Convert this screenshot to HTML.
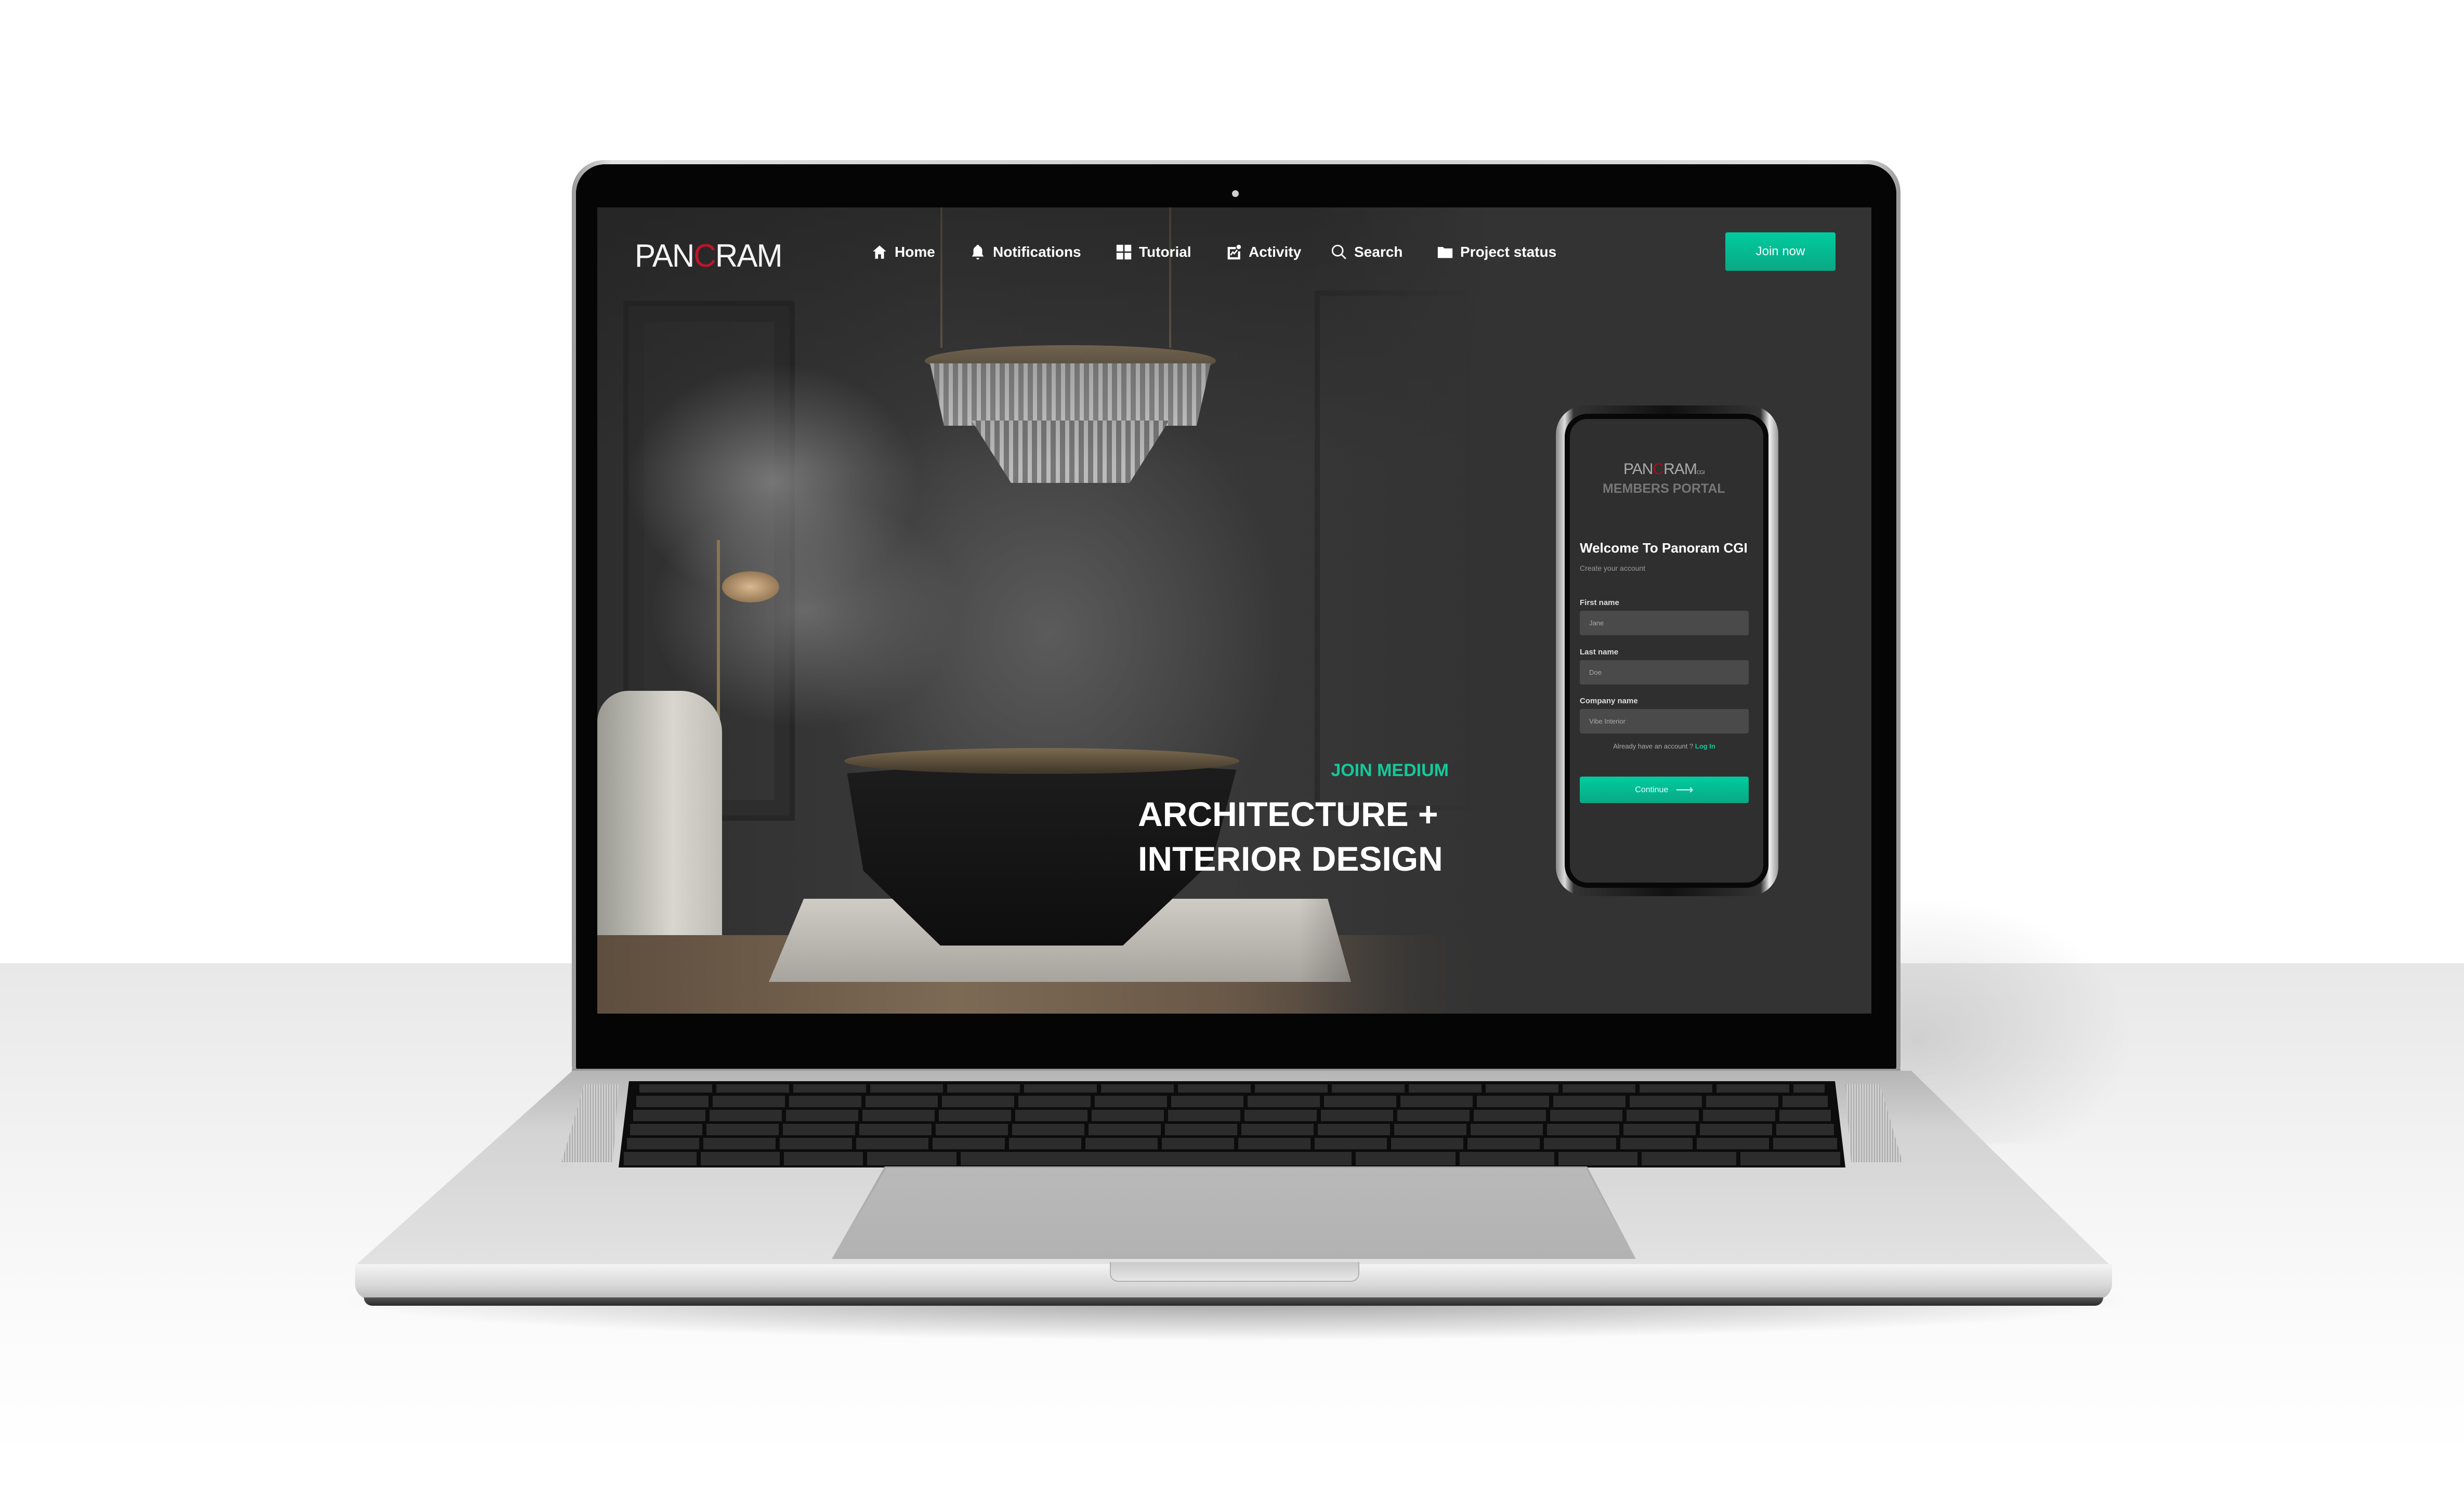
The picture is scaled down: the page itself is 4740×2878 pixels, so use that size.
<!DOCTYPE html>
<html><head><meta charset="utf-8">
<style>
*{margin:0;padding:0;box-sizing:border-box}
html,body{width:4740px;height:2878px;background:#fff;overflow:hidden;font-family:"Liberation Sans",sans-serif}
.abs{position:absolute}
#floor{left:0;top:1853px;width:4740px;height:1025px;background:linear-gradient(#e8e8e8 0,#f1f1f1 300px,#fafafa 650px,#fff 950px)}
#shadow{left:640px;top:2470px;width:3480px;height:110px;background:radial-gradient(ellipse at 50% 30%,rgba(0,0,0,.35),rgba(0,0,0,0) 70%)}
#rshadow{left:3640px;top:1700px;width:500px;height:500px;background:radial-gradient(ellipse at 10% 60%,rgba(0,0,0,.12),rgba(0,0,0,0) 65%)}
#lidOuter{left:1100px;top:308px;width:2556px;height:1756px;border-radius:62px 62px 14px 14px;background:linear-gradient(90deg,#9a9a9a,#e0e0e0 3%,#cfcfcf 50%,#e0e0e0 97%,#9a9a9a)}
#lid{left:1108px;top:316px;width:2540px;height:1744px;border-radius:56px 56px 8px 8px;background:#050505}
#cam{left:2370px;top:366px;width:13px;height:13px;border-radius:50%;background:#cfcfcf}
#screen{left:1149px;top:399px;width:2451px;height:1551px;background:#333;overflow:hidden}
#deck{left:683px;top:2060px;width:3380px;height:380px;clip-path:polygon(418px 0,2994px 0,3377px 375px,0 375px);background:linear-gradient(#b5b5b5,#d3d3d3 30%,#dcdcdc 70%,#e2e2e2)}
#hinge{left:1100px;top:2056px;width:2556px;height:10px;background:linear-gradient(#8a8a8a,#c9c9c9)}
#lip{left:683px;top:2432px;width:3380px;height:68px;border-radius:0 0 30px 30px;background:linear-gradient(#f4f4f4,#d8d8d8 60%,#b8b8b8)}
#bottom{left:700px;top:2496px;width:3346px;height:16px;border-radius:0 0 30px 30px;background:linear-gradient(#555,#2a2a2a)}
#notch{left:2135px;top:2428px;width:480px;height:38px;border-radius:0 0 16px 16px;background:linear-gradient(#c9c9c9,#e6e6e6);border:2px solid #b0b0b0;border-top:none}
#kbwell{left:1190px;top:2080px;width:2360px;height:166px;clip-path:polygon(20px 0,2340px 0,2360px 166px,0 166px);background:#0c0c0c}
.row{position:absolute;height:22px}
#track{left:1600px;top:2244px;width:1547px;height:178px;clip-path:polygon(102px 0,1453px 0,1547px 178px,0 178px);background:linear-gradient(#a8a8a8,#b6b6b6);}
#track2{left:1603px;top:2247px;width:1541px;height:175px;clip-path:polygon(102px 0,1448px 0,1541px 175px,0 175px);background:linear-gradient(#b9b9b9,#b2b2b2)}
.grille{top:2086px;height:150px;width:110px;background:repeating-linear-gradient(90deg,#aaa 0 2px,#d0d0d0 2px 5px)}
#hero{left:0;top:0;width:1720px;height:1551px}
.b{position:absolute;border-radius:50%}
#fade{left:0;top:0;width:2451px;height:1551px;background:linear-gradient(90deg,rgba(51,51,51,0) 0,rgba(51,51,51,0) 1350px,#333 1720px),linear-gradient(rgba(30,30,30,.55),rgba(30,30,30,0) 500px)}
.logo{position:absolute;left:72px;top:58px;font-size:62px;color:#f4f4f4;font-weight:300;letter-spacing:-2px;transform:scaleX(.97);transform-origin:left}
.logo b{color:#c2132b;font-weight:300}
.ni{position:absolute;top:69px;font-size:28px;color:#fff;font-weight:bold;display:flex;align-items:center;gap:12px}
.ni svg{width:34px;height:34px}
.btn{position:absolute;left:2170px;top:48px;width:212px;height:74px;border-radius:4px;background:linear-gradient(#00cc9f,#0aa883);color:#fff;font-size:24px;display:flex;align-items:center;justify-content:center}
.jm{position:absolute;left:238px;width:1400px;text-align:right;top:1064px;color:#14c99a;font-size:34px;font-weight:bold;letter-spacing:0}
.h1{position:absolute;left:1040px;top:1124px;color:#fff;font-size:66px;font-weight:bold;line-height:86px;letter-spacing:0}
#phone{left:2993px;top:780px;width:428px;height:944px;border-radius:56px;background:linear-gradient(90deg,#888,#ddd 4%,#333 8%,#111 50%,#333 92%,#eee 96%,#999);}
#pscreen{left:3010px;top:796px;width:392px;height:912px;border-radius:44px;background:#2f2f2f;border:10px solid #080808}
.pt{position:absolute;color:#fff;white-space:nowrap}
.inp{position:absolute;left:3039px;width:325px;height:47px;background:#4a4a4a;border-radius:4px;color:#aaa;font-size:13px;padding-left:18px;line-height:47px}
.lbl{position:absolute;left:3039px;font-size:15px;font-weight:bold;color:#ddd}
</style></head><body>
<div id="floor" class="abs"></div>
<div id="rshadow" class="abs"></div>
<div id="shadow" class="abs"></div>
<div id="lidOuter" class="abs"></div>
<div id="lid" class="abs"></div>
<div id="cam" class="abs"></div>

<div id="screen" class="abs">
 <div id="hero" class="abs" style="background:linear-gradient(90deg,#2e2e2e,#3a3a3a 40%,#353535)">
  <div class="abs" style="left:50px;top:180px;width:330px;height:1000px;border:10px solid #262626;box-shadow:inset 0 0 0 30px #2d2d2d"></div>
  <div class="abs" style="left:1380px;top:160px;width:300px;height:1000px;border:10px solid #2a2a2a"></div>
  <div class="b" style="left:60px;top:300px;width:560px;height:460px;background:radial-gradient(closest-side,rgba(130,130,130,.85),rgba(80,80,80,0))"></div>
  <div class="b" style="left:100px;top:550px;width:600px;height:450px;background:radial-gradient(closest-side,rgba(140,140,140,.6),rgba(80,80,80,0))"></div>
  <div class="b" style="left:420px;top:320px;width:900px;height:1000px;background:radial-gradient(closest-side,rgba(95,95,95,.9),rgba(60,60,60,0))"></div>
  <div class="abs" style="left:630px;top:265px;width:560px;height:60px;border-radius:50%;background:linear-gradient(#8c7b60,#5b4e3b)"></div>
  <div class="abs" style="left:640px;top:300px;width:540px;height:120px;background:repeating-linear-gradient(90deg,#c9c9c9 0 8px,#8a8a8a 8px 18px);clip-path:polygon(0 0,100% 0,95% 100%,5% 100%)"></div>
  <div class="abs" style="left:720px;top:410px;width:380px;height:120px;background:repeating-linear-gradient(90deg,#bbb 0 8px,#777 8px 18px);clip-path:polygon(0 0,100% 0,80% 100%,20% 100%)"></div>
  <div class="abs" style="left:660px;top:0;width:4px;height:270px;background:#6b6250"></div>
  <div class="abs" style="left:1100px;top:0;width:4px;height:270px;background:#6b6250"></div>
  <div class="abs" style="left:230px;top:640px;width:6px;height:720px;background:#8a7550"></div>
  <div class="b" style="left:240px;top:700px;width:110px;height:60px;background:radial-gradient(#d8b890,#7a5e3e)"></div>
  <div class="abs" style="left:0;top:930px;width:240px;height:480px;border-radius:60px 80px 10px 10px;background:linear-gradient(90deg,#9a9a92,#d8d6ce 60%,#bfbdb5)"></div>
  <div class="abs" style="left:0;top:1400px;width:1720px;height:151px;background:linear-gradient(90deg,#5e4e3e,#7d6a55 40%,#6a5948 70%,#333)"></div>
  <div class="abs" style="left:330px;top:1330px;width:1120px;height:160px;background:linear-gradient(#cfcbc5,#a7a39d);clip-path:polygon(6% 0,96% 0,100% 100%,0 100%)"></div>
  <div class="abs" style="left:465px;top:1060px;width:780px;height:360px;background:linear-gradient(#1d1d1d,#0e0e0e);clip-path:polygon(2% 8%,50% 0,98% 6%,92% 55%,70% 100%,25% 100%,6% 60%)"></div>
  <div class="abs" style="left:475px;top:1040px;width:760px;height:50px;border-radius:50%;background:linear-gradient(#7a6a50,#3e3528)"></div>
 </div>
 <div id="fade" class="abs"></div>

 <div class="logo">PAN<b>C</b>RAM</div>
 <div class="ni" style="left:526px"><svg viewBox="0 0 24 24"><path d="M3 11 12 3l9 8h-3v10h-4v-6h-4v6H6V11z" fill="#fff"/></svg>Home</div>
 <div class="ni" style="left:715px"><svg viewBox="0 0 24 24"><path d="M12 2a2 2 0 0 1 2 2 6 6 0 0 1 4 6v5l2 3H4l2-3v-5a6 6 0 0 1 4-6 2 2 0 0 1 2-2zm-2 18h4a2 2 0 0 1-4 0z" fill="#fff"/></svg>Notifications</div>
 <div class="ni" style="left:996px"><svg viewBox="0 0 24 24"><path d="M2 2h9v9H2zM13 2h9v9h-9zM2 13h9v9H2zM13 13h9v9h-9z" fill="#fff"/></svg>Tutorial</div>
 <div class="ni" style="left:1207px"><svg viewBox="0 0 24 24"><path d="M4 5h11v3H7v11h11v-8h3v11H4z" fill="#fff"/><circle cx="19" cy="5" r="3" fill="#fff"/><path d="M8 16l3-4 2 2 4-5" stroke="#fff" stroke-width="2" fill="none"/></svg>Activity</div>
 <div class="ni" style="left:1410px"><svg viewBox="0 0 24 24"><circle cx="10" cy="10" r="7" stroke="#fff" stroke-width="2" fill="none"/><path d="M15 15l6 6" stroke="#fff" stroke-width="2"/></svg>Search</div>
 <div class="ni" style="left:1614px"><svg viewBox="0 0 24 24"><path d="M2 5h7l2 2h11v13H2z" fill="#fff"/></svg>Project status</div>
 <div class="btn">Join now</div>

 <div class="jm">JOIN MEDIUM</div>
 <div class="h1">ARCHITECTURE +<br>INTERIOR DESIGN</div>
</div>

<div id="phone" class="abs"></div>
<div id="pscreen" class="abs"></div>
<div class="pt" style="left:3123px;top:886px;font-size:30px;color:#aaa;letter-spacing:-1px">PAN<span style="color:#a01020">C</span>RAM<span style="font-size:10px">CGI</span></div>
<div class="pt" style="left:3083px;top:926px;font-size:25px;color:#777;font-weight:bold;letter-spacing:0">MEMBERS PORTAL</div>
<div class="pt" style="left:3039px;top:1039px;font-size:26px;font-weight:bold">Welcome To Panoram CGI</div>
<div class="pt" style="left:3039px;top:1085px;font-size:14px;color:#999">Create your account</div>
<div class="lbl" style="top:1151px">First name</div>
<div class="inp" style="top:1175px">Jane</div>
<div class="lbl" style="top:1246px">Last name</div>
<div class="inp" style="top:1270px">Doe</div>
<div class="lbl" style="top:1340px">Company name</div>
<div class="inp" style="top:1364px">Vibe Interior</div>
<div class="pt" style="left:3039px;width:325px;text-align:center;top:1428px;font-size:13px;color:#aaa">Already have an account ? <span style="color:#14c99a;font-weight:bold">Log In</span></div>
<div class="abs" style="left:3039px;top:1494px;width:325px;height:51px;border-radius:4px;background:linear-gradient(#00cc9f,#0aa883);color:#dff;font-size:16px;display:flex;align-items:center;justify-content:center;gap:14px">Continue <span style="font-size:24px">⟶</span></div>

<div id="hinge" class="abs"></div>
<div id="deck" class="abs"></div>
<div class="abs grille" style="left:1080px;clip-path:polygon(40% 0,100% 0,90% 100%,0 100%)"></div>
<div class="abs grille" style="left:3550px;clip-path:polygon(0 0,60% 0,100% 100%,10% 100%)"></div>
<div id="kbwell" class="abs">
 <div class="row" style="left:40px;top:6px;width:2280px;height:16px;background:repeating-linear-gradient(90deg,#2c2c2c 0 140px,#0c0c0c 140px 148px)"></div>
 <div class="row" style="left:34px;top:28px;width:2292px;background:repeating-linear-gradient(90deg,#2c2c2c 0 139px,#0c0c0c 139px 147px)"></div>
 <div class="row" style="left:28px;top:55px;width:2304px;background:repeating-linear-gradient(90deg,#2c2c2c 0 139px,#0c0c0c 139px 147px)"></div>
 <div class="row" style="left:22px;top:82px;width:2316px;background:repeating-linear-gradient(90deg,#2c2c2c 0 139px,#0c0c0c 139px 147px)"></div>
 <div class="row" style="left:16px;top:109px;width:2328px;background:repeating-linear-gradient(90deg,#2c2c2c 0 139px,#0c0c0c 139px 147px)"></div>
 <div class="row" style="left:10px;top:136px;width:2340px;height:26px;background:linear-gradient(90deg,#2c2c2c 0 140px,#0c0c0c 140px 148px,#2c2c2c 148px 300px,#0c0c0c 300px 308px,#2c2c2c 308px 460px,#0c0c0c 460px 468px,#2c2c2c 468px 640px,#0c0c0c 640px 648px,#2c2c2c 648px 1400px,#0c0c0c 1400px 1408px,#2c2c2c 1408px 1600px,#0c0c0c 1600px 1608px,#2c2c2c 1608px 1790px,#0c0c0c 1790px 1798px,#2c2c2c 1798px 1950px,#0c0c0c 1950px 1958px,#2c2c2c 1958px 2140px,#0c0c0c 2140px 2148px,#2c2c2c 2148px)"></div>
</div>
<div id="track" class="abs"></div>
<div id="track2" class="abs"></div>
<div id="lip" class="abs"></div>
<div id="bottom" class="abs"></div>
<div id="notch" class="abs"></div>
</body></html>
